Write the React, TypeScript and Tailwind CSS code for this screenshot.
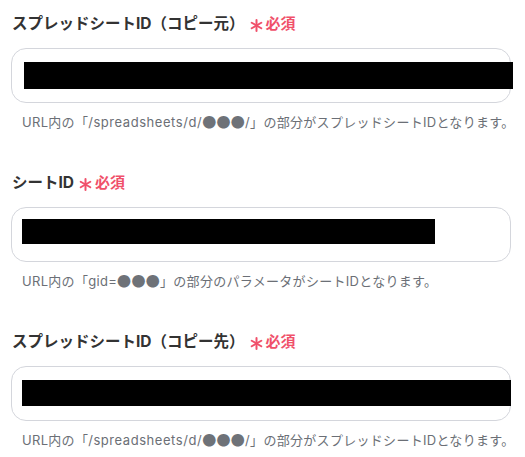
import React from "react";

const font = { fontFamily: 'Inter, "Noto Sans CJK JP", sans-serif' };

function Star() {
  return (
    <svg width="13" height="13" viewBox="0 0 13 13" className="ml-[5px] mt-[3px]" fill="none" stroke="#f0506a" strokeWidth="2" strokeLinecap="round">
      <line x1="6.5" y1="1" x2="6.5" y2="12" />
      <line x1="1.7" y1="3.75" x2="11.3" y2="9.25" />
      <line x1="1.7" y1="9.25" x2="11.3" y2="3.75" />
    </svg>
  );
}

function Dots() {
  return <span className="[font-family:'Noto_Sans_CJK_JP'] text-[14px] text-[#6e7278]">●●●</span>;
}

function Path() {
  return <span className="tracking-[0.55px]">/spreadsheets/d/</span>;
}

function Field({ label, help, barClass }: { label: string; help: React.ReactNode; barClass: string }) {
  return (
    <div className="flex flex-col">
      <div className="flex items-center h-[24px] pl-px text-[15.5px] font-bold text-[#333333] leading-[24px]">
        <span>{label}</span>
        <Star />
        <span className="ml-[3px] text-[#f0506a] text-[15px] font-bold">必須</span>
      </div>
      <div className="mt-[12px] h-[55px] w-[500px] rounded-[15px] border border-[#d4d6dc] bg-white relative">
        <div className={barClass} />
      </div>
      <div className="mt-[8px] pl-[11px] text-[13px] leading-[20px] text-[#6b6f76] whitespace-nowrap tracking-[0.3px]">{help}</div>
    </div>
  );
}

export default function App() {
  return (
    <div className="w-[525px] h-[457px] bg-white pl-[11px] pt-[12px] flex flex-col gap-[39px] overflow-hidden" style={font}>
      <Field
        label="スプレッドシートID（コピー元）"
        help={<>URL内の「<Path /><Dots />/」の部分がスプレッドシートIDとなります。</>}
        barClass="absolute left-[12px] top-[13px] h-[27px] w-[489px] bg-black"
      />
      <Field
        label="シートID"
        help={<>URL内の「gid=<Dots />」の部分のパラメータがシートIDとなります。</>}
        barClass="absolute left-[10px] top-[11px] h-[25px] w-[413px] bg-black"
      />
      <Field
        label="スプレッドシートID（コピー先）"
        help={<>URL内の「<Path /><Dots />/」の部分がスプレッドシートIDとなります。</>}
        barClass="absolute left-[10px] top-[13px] h-[26px] w-[489px] bg-black"
      />
    </div>
  );
}
